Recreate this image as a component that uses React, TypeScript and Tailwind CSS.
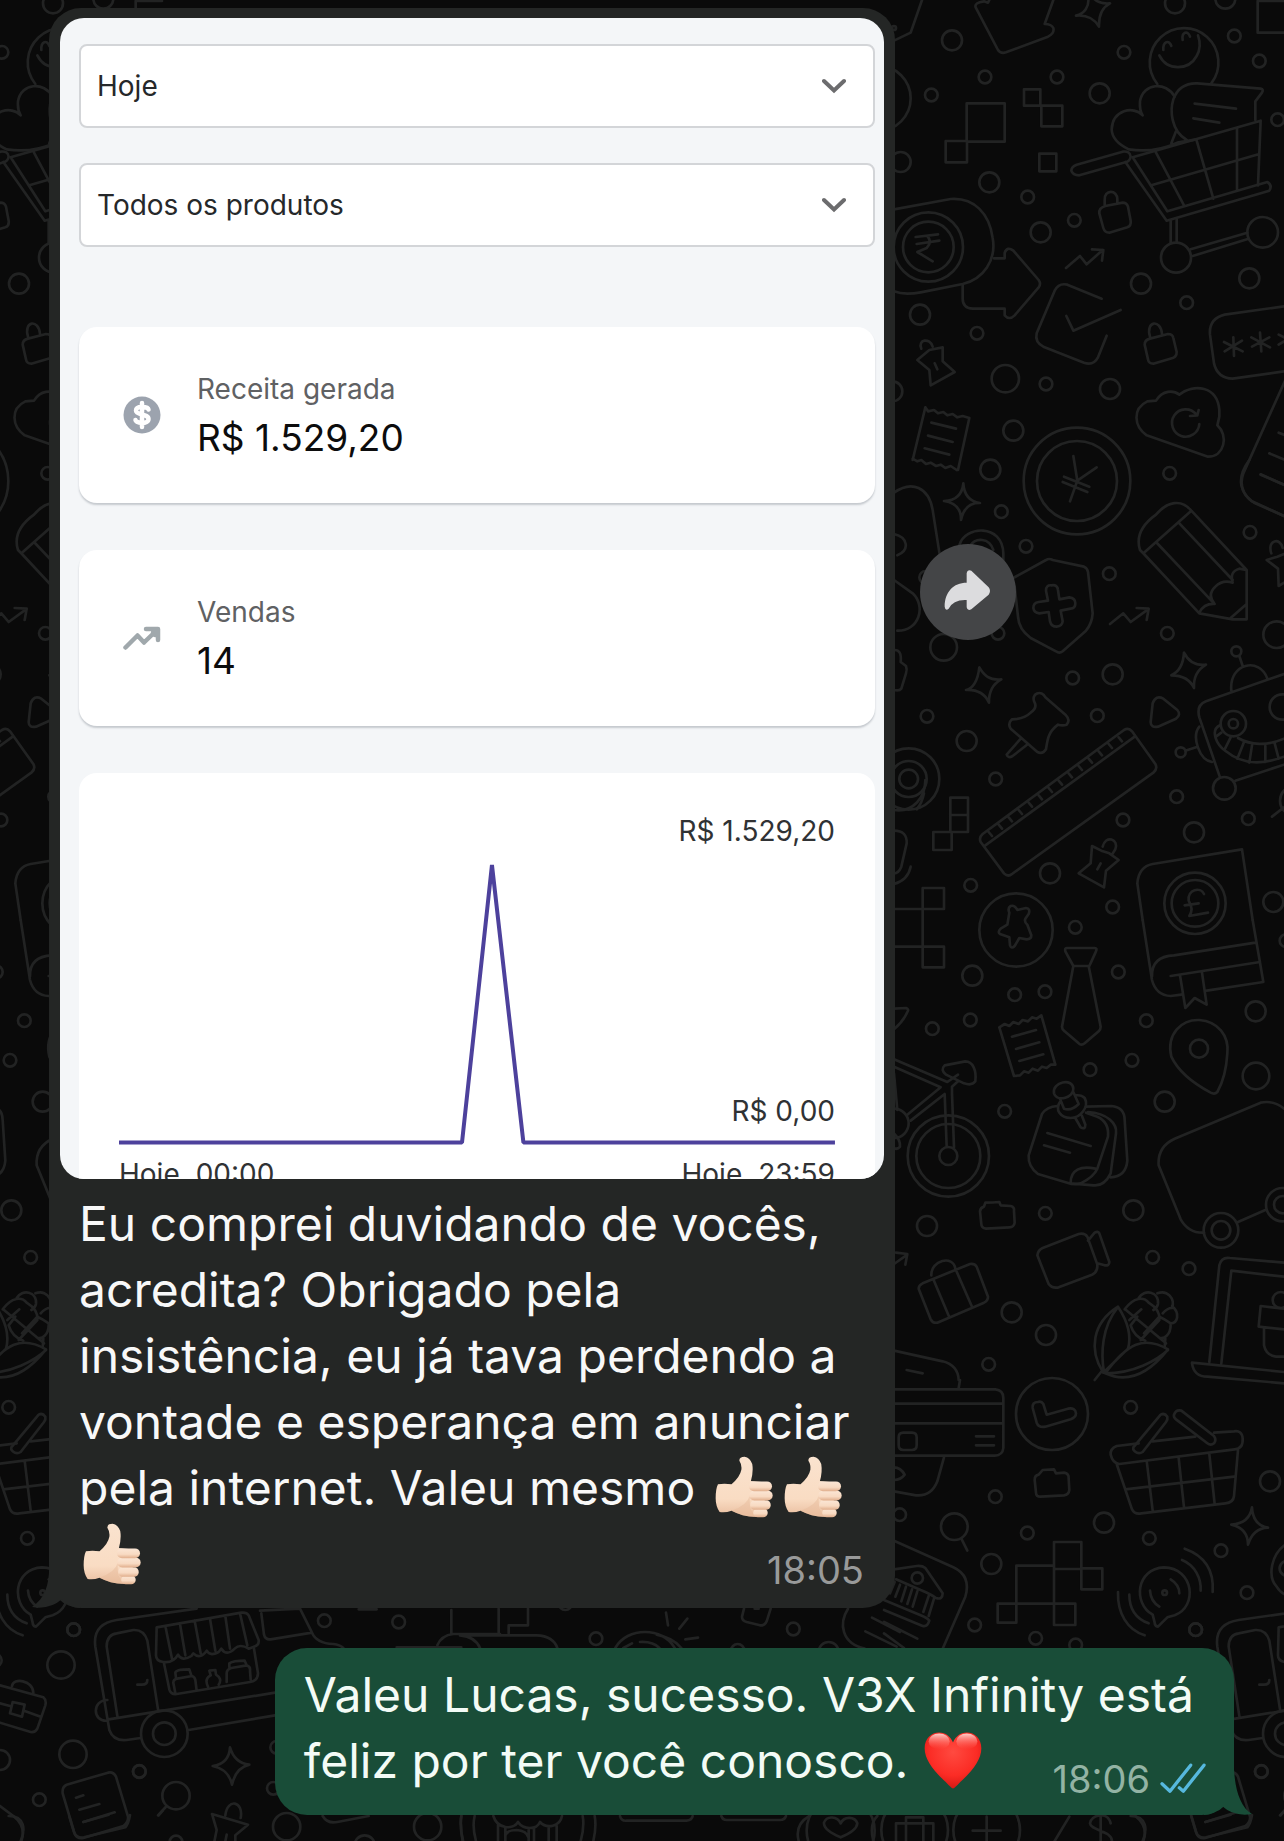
import React, { useState } from 'react';

type Dot = [number, number, number];

interface Patch {
  x: number;
  y: number;
  dots: Dot[];
  paths: string[];
}

// Doodles are drawn at three times their size, one patch after another
const patches: Patch[] = [
  {
    x: 884,
    y: 0,
    dots: [
      [204, 121, 30], [303, 231, 19], [519, 231, 19], [142, 285, 19], [647, 280, 30], [720, 157, 19],
      [873, 10, 30], [1024, -4, 30], [1051, 108, 19], [1126, 183, 19], [1181, 359, 19], [50, 486, 30],
      [316, 547, 30], [431, 591, 19], [571, 661, 19], [470, 697, 30], [771, 851, 30], [1096, 835, 30],
      [908, 908, 19], [108, 944, 30], [279, 1000, 19], [364, 1136, 41], [486, 1152, 19], [678, 1167, 30],
      [25, 1174, 30], [388, 1292, 30], [133, 741, 76], [133, 741, 104], [-18, 295, 98], [30, 84, 6],
      [876, 773, 45], [1136, 697, 46], [579, 1443, 120], [579, 1443, 160],
    ],
    paths: [
      'M114 0L80 98L30 122',
      'M316 0l-4 8l-12-4Q270 8 275 22L342 150Q350 162 366 157L492 110Q512 100 508 84Q502 72 482 72L508 0',
      'M612-10C618 20 600 42 576 47C610 44 632 58 645 80C644 46 654 22 678 10C656 12 640 8 628-6',
      'M1121 3H1200M1121 3V98H1200',
      'M820 252A103 103 0 1 1 982 250',
      'M826 166C850 214 914 212 938 168Q954 140 942 106M838 150C836 124 856 118 862 138M896 120C892 96 912 90 918 110',
      'M862 430L876 394M872 290C846 244 778 248 768 304Q766 330 776 346C748 316 686 330 683 388Q684 424 734 448Q810 460 880 428L938 418',
      'M908 420C860 392 858 330 868 298Q886 248 940 250L1130 266Q1140 268 1134 278L1114 304V360M932 311L1056 326M928 355L1006 368',
      'M746 472L1130 362L1122 556M746 472L850 634L1150 546Q1166 556 1156 572L848 662L724 486M816 458L900 616M938 422L988 596M1059 384V572M802 556L1126 462',
      'M578 494L716 455Q738 452 740 470Q738 484 724 487L586 526Q566 526 562 512Q562 500 578 494Z',
      'M860 662V728M878 656V728M920 748L1090 698M926 768L1094 716',
      'M248 310H362V425H248ZM185 423H249V487H185ZM420 268H469V317H420ZM472 317H535V379H472ZM466 461H517V514H466Z',
      'M30 628L200 597C270 592 316 640 326 714C338 780 298 838 236 852L110 877Q60 886 30 874',
      'M95 711L162 703M98 732L166 722M130 708Q146 726 128 744L100 756L146 784',
      'M330 775H362V758Q370 738 388 752L464 840Q472 852 464 862L392 946Q376 962 362 946V926H266Q236 924 236 896V854',
      'M662 614V600C660 568 700 568 700 598V610M664 618L716 608Q728 608 732 620L740 662Q742 678 730 682L676 698Q662 698 658 684L646 640Q644 624 664 618Z',
      'M546 804L588 768L608 793L656 750M624 748L658 750L654 782',
      'M653 896L550 854Q524 848 512 872L458 1000Q452 1026 478 1040L600 1088Q628 1098 642 1072L668 1007M547 948L568 992L710 930',
      'M798 1010C784 962 830 956 834 1002M798 1016L852 1002Q866 1002 868 1014L878 1056Q878 1070 866 1074L808 1091Q794 1091 792 1078L782 1034Q782 1020 798 1016Z',
      'M1200 919L1022 944Q974 956 978 1004L990 1090Q1000 1134 1046 1136L1200 1114',
      'M1048 1012L1050 1068M1020 1026L1076 1054M1022 1054L1074 1022M1128 998L1132 1054M1102 1012L1158 1042M1104 1040L1156 1012M1184 1004L1200 1012M1184 1034L1200 1024',
      'M112 1046C100 1018 138 1012 146 1040M136 1050L176 1042V1084L212 1116L140 1156L136 1110L100 1080ZM152 1090L160 1108',
      'M124 1222L132 1234L150 1230L162 1240L178 1236L190 1246L206 1242L220 1252L236 1248L256 1254L222 1410M124 1222L86 1380M142 1268L216 1286M132 1307L206 1326M122 1345L196 1364M86 1376L100 1384L112 1380L126 1392L140 1388L156 1398L170 1394L184 1404L200 1398L218 1410',
      'M816 1202C836 1170 868 1170 886 1184C930 1150 1000 1158 1006 1230V1250L1000 1276C1034 1306 1022 1370 972 1370L788 1306C750 1280 744 1226 790 1204ZM946 1272A41 41 0 1 1 936 1242M918 1248L940 1246L944 1230',
      'M1204 1140L1078 1420Q1060 1470 1104 1504L1200 1548M1184 1298L1204 1306M1156 1360L1204 1380M1130 1424L1204 1456',
      'M568 1368L580 1442L638 1402M580 1442L558 1504M540 1430L616 1460M536 1446L610 1476',
    ],
  },
  {
    x: 884,
    y: 460,
    dots: [
      [319, 29, 30], [352, 155, 19], [426, 259, 19], [857, 40, 19], [676, 341, 19], [850, 520, 19],
      [1098, 217, 19], [1178, 524, 40], [179, 562, 40], [566, 654, 19], [686, 643, 30], [640, 767, 19],
      [129, 769, 19], [248, 843, 30], [335, 957, 19], [717, 1080, 19], [878, 1010, 19], [1093, 1076, 19],
      [930, 1117, 30], [498, 1240, 30], [260, 1276, 19], [686, 1341, 19], [1168, 1326, 30], [1057, 574, 15],
      [1048, 791, 38], [1048, 791, 14], [1195, 741, 38], [1021, 985, 34], [890, 877, 15], [74, 957, 92],
      [74, 957, 54], [74, 957, 28], [342, 520, 19], [125, 352, 19], [933, 1330, 92], [933, 1330, 70],
      [396, 1410, 110], [1232, 1022, 44],
    ],
    paths: [
      'M30 98C84 60 134 82 146 150L168 290M30 222C72 232 78 270 40 286M30 360L86 400C128 440 104 514 40 512',
      'M30 570Q54 568 50 606L66 618Q70 628 66 640L52 686Q46 694 30 690',
      'M226 256C242 196 356 190 358 280V310M258 258C274 232 316 232 328 270',
      'M238 70C234 110 210 122 180 123C214 128 232 146 231 180C238 146 258 128 288 129C256 124 240 106 238 70Z',
      'M384 356L486 300Q496 294 506 300L600 320Q610 324 612 336L626 460Q624 490 606 512L536 574Q526 582 516 574L440 534Q404 508 402 470L392 380',
      'M486 392Q486 374 502 376Q520 372 522 390L526 418L556 412Q574 414 574 430Q574 446 560 446L530 452L536 484Q534 498 518 500Q502 500 498 484L494 456L466 460Q450 458 448 444Q448 428 464 426L492 422Z',
      'M678 492L718 460L740 486L792 448M758 444L794 446L788 480',
      'M768 270C754 226 780 190 816 164C850 124 892 116 922 152L1088 330V478L1046 478L946 460L780 282ZM780 278L922 152M816 246L990 430M884 188L1046 360M946 458Q960 430 992 432Q968 404 994 380Q1016 358 1046 368Q1036 334 1066 326L1086 330M1040 474L1088 432',
      'M1096 0Q1066 40 1072 76Q1080 112 1110 128L1200 168M1130 43L1200 74',
      'M1162 280C1148 238 1190 232 1196 264M1200 282L1180 290L1148 300L1182 326L1184 378L1204 366',
      'M286 622C282 656 270 684 246 690C286 688 304 704 315 728C314 692 326 672 352 658C316 662 300 646 286 622Z',
      'M900 578C898 612 888 634 862 646C898 646 918 658 930 684C928 648 942 628 966 614C932 618 912 602 900 578Z',
      'M452 728C438 700 474 688 484 712L546 766Q560 780 548 794Q536 798 522 794C492 816 490 840 486 868Q476 884 460 876L380 806Q370 790 384 778Q420 778 440 758Q460 744 452 728ZM410 836L368 884Q372 896 386 888L432 852',
      'M806 730Q816 704 838 716L880 750Q892 764 876 776L822 800Q800 804 800 786Z',
      'M720 810Q734 802 744 814L814 912Q822 926 808 938L384 1242Q372 1252 360 1240L290 1146Q284 1132 296 1122ZM304 1156L752 830M314 1116L324 1128M344 1094L354 1106M374 1072L384 1084M404 1050L414 1062M434 1028L444 1040M464 1006L474 1018M494 984L504 996M524 962L534 974M554 940L564 952M584 918L594 930M614 896L624 908M644 874L654 886M674 852L684 864M704 832L714 844',
      'M1066 588L1076 618M1042 692C1034 608 1128 590 1150 656M1200 642L966 724Q936 736 946 772L1008 952M1054 962L1200 914M946 800C922 830 946 900 984 906M904 872L936 862',
      'M1008 796C978 810 996 854 1026 874C1080 918 1140 912 1200 890M1062 834C1100 856 1150 858 1200 836M996 830L1012 818M1022 868L1040 832M1060 896L1080 846M1096 908L1104 856M1144 906L1144 858M1184 896L1172 850',
      'M30 1050C90 1058 124 1010 124 960M120 1000Q114 1030 98 1048M30 1112Q70 1112 68 1150L52 1220Q44 1240 30 1240M80 1220Q72 1260 30 1272',
      'M199 1013H252V1116H199ZM199 1065H252M148 1116H203V1170H148ZM30 1347H116M116 1284H180V1347H116ZM116 1347V1460M30 1460H180M116 1460H180V1522H116Z',
      'M656 1160C664 1124 706 1136 694 1168L684 1184M624 1158L652 1172L676 1180L704 1200L666 1232L660 1282L584 1240L620 1210ZM650 1210L640 1228',
      'M1164 1070L1200 1042',
      'M776 1380L760 1270Q764 1220 806 1212L1074 1168L1106 1380',
      'M960 1302C950 1280 910 1288 914 1322Q930 1346 916 1368L972 1358M902 1336L944 1330',
    ],
  },
  {
    x: 884,
    y: 920,
    dots: [
      [574, 22, 19], [265, 167, 30], [392, 224, 19], [483, 215, 19], [259, 300, 19], [145, 326, 19],
      [703, 156, 19], [787, 302, 19], [744, 421, 19], [618, 449, 19], [842, 545, 30], [1115, 274, 30],
      [1116, 468, 40], [945, 386, 27], [362, 574, 19], [748, 871, 30], [129, 918, 30], [484, 880, 19],
      [383, 1177, 30], [486, 1245, 30], [314, 1333, 19], [806, 1012, 19], [915, 1046, 19], [193, 708, 122],
      [193, 708, 96], [193, 708, 27], [1011, 931, 52], [1011, 931, 28], [1196, 854, 50], [1196, 854, 26],
      [1206, 62, 19], [30, 610, 44], [1190, 1140, 24],
    ],
    paths: [
      'M376-22Q370-36 380-42Q392-46 400-30L426-36Q440-34 434-18L424-4Q420 6 430 14L442 46Q442 58 428 58L406 54L392 78Q382 88 378 76L376 52L348 42Q340 36 350 26L370 14Z',
      'M548 84H632Q640 84 636 94L616 138H568L544 94Q542 84 548 84ZM568 138L534 320Q534 328 542 334L584 370Q592 378 602 370L644 334Q650 328 650 320L614 138',
      'M776 0L804 180Q816 226 860 228L892 224M804 170C802 126 830 108 870 106L1114 68M1106 0L1138 186L968 212M860 168L1128 126M888 166L904 264L932 234L968 254L954 158',
      'M30 266L66 264Q76 268 70 276Q58 304 30 328',
      'M346 322L362 312L376 318L388 306L404 312L416 300L432 304L444 292L458 296L472 286L514 434L500 434L488 444L474 440L462 452L446 446L434 458L420 454L408 466L390 468ZM384 350L456 330M396 387L466 367M406 423L478 403',
      'M862 410C846 340 894 298 946 300C1002 304 1036 348 1030 400Q1026 470 1000 516Q992 524 980 518Q890 470 862 410Z',
      'M30 418L190 486L222 464M30 440L170 502L70 584M80 602L182 522L188 680M222 484L204 500V520L210 682M182 436L244 424C266 424 278 450 274 484Q264 498 240 490L186 464Q168 450 182 436ZM30 460L40 570M30 640Q50 660 48 680Q40 690 30 684',
      'M510 520C504 486 566 472 568 506C570 532 520 548 510 520ZM528 536L540 566Q562 574 584 552L568 516M530 542C510 570 530 594 560 594C590 594 616 560 602 534Q592 524 576 526M574 594L590 622Q604 630 604 614L594 588',
      'M520 558Q488 560 474 582L434 706Q432 740 462 762L550 788Q570 796 590 790Q630 770 640 746L672 650Q676 606 640 590L606 578M606 560L682 558Q722 562 722 600L730 722Q726 770 680 772M612 576C670 580 700 610 696 640L680 760Q660 800 628 796L560 790M560 788C560 750 590 736 634 746M490 639L620 678M480 676L558 698',
      'M1200 566Q1170 540 1130 548L872 656Q820 680 824 736L890 898Q914 940 960 938M1062 906L1144 870',
      'M300 860L304 848Q326 848 346 846L350 856L380 858Q392 860 390 874L392 908Q390 922 376 922L306 926Q292 924 292 912L288 874Q290 862 300 860Z',
      'M476 984L584 942Q602 938 610 950L640 1034Q642 1056 624 1064L524 1102Q504 1106 494 1092L460 1006Q462 990 476 984ZM612 962L632 938Q642 932 646 940L676 1026Q676 1038 662 1036L640 1030',
      'M30 1032L70 1004M36 998L70 1002L64 1034',
      'M116 1090L258 1032Q272 1030 278 1040L312 1130Q312 1142 300 1148L160 1208Q146 1210 140 1198L104 1106Q104 1096 116 1090ZM142 1066C140 1020 208 1004 214 1046M148 1078L196 1192M214 1046L264 1160',
      'M658 1358C614 1290 624 1210 702 1160Q748 1230 732 1286L660 1356C650 1300 654 1220 700 1164M664 1360C730 1270 780 1246 852 1288Q760 1404 664 1360C750 1360 820 1320 852 1290M632 1380L656 1350',
      'M722 1168C750 1130 780 1130 794 1148Q830 1170 826 1200L770 1260M740 1216L760 1190M740 1216Q750 1250 784 1262M726 1170L846 1270M764 1134C780 1106 826 1114 822 1152Q820 1164 808 1170M820 1120C850 1108 874 1136 864 1164Q850 1164 836 1180M864 1158C890 1180 880 1210 860 1210Q840 1196 826 1190M772 1168L736 1200M826 1190L780 1240M860 1214C860 1244 840 1260 824 1252M844 1256L842 1282',
      'M976 1326L1006 1036Q1012 1010 1038 1014L1200 1028M1012 1330L1042 1052L1200 1070M924 1328L1200 1356M924 1330Q930 1370 970 1370L1200 1390M1130 1158L1200 1166M1130 1158L1124 1220L1200 1228M1140 1224V1276Q1146 1306 1176 1310H1200',
      'M30 1292L176 1324Q222 1336 224 1380M68 1350L116 1360',
    ],
  },
  {
    x: 884,
    y: 1380,
    dots: [
      [504, 102, 108], [740, 82, 19], [334, 350, 19], [430, 459, 19], [660, 428, 30], [796, 475, 19],
      [1158, 304, 30], [1011, 512, 19], [1089, 638, 19], [935, 749, 19], [211, 440, 40], [322, 552, 30],
      [272, 735, 19], [455, 775, 19], [575, 795, 19], [842, 638, 7], [100, 594, 17], [47, 404, 19],
      [1132, 1175, 19], [308, 1350, 100], [92, 1350, 100],
    ],
    paths: [
      'M30 28H334Q358 30 358 54V204Q356 226 332 227H30M30 71H356M30 130H356M58 158H84Q98 158 98 172V196Q98 210 84 210H58Q44 210 44 196V172Q44 158 58 158ZM276 169H330M276 196H330M224 24L228 0M180 232L160 304Q142 350 96 346L30 334M30 262Q50 262 62 284Q50 300 30 300',
      'M446 84Q444 66 462 66Q472 62 478 72L488 104L552 86Q574 82 576 100Q576 112 560 118L484 140Q464 144 458 128Z',
      'M464 284L476 270L510 268L516 280L540 278Q556 280 554 296L556 330Q554 344 540 346L470 350Q456 350 456 338L452 300Q452 286 464 284Z',
      'M764 190L698 198Q678 206 680 224Q686 250 706 252L1052 208Q1078 206 1076 176Q1074 150 1050 154L990 158M806 184L934 170M698 252L744 388Q752 404 772 400L1024 370Q1048 368 1050 348L1062 210M724 328L1050 290M788 242L806 392M884 234L900 382M976 222L992 372',
      'M748 202L830 104Q842 98 850 110Q852 118 846 126L776 216Q764 224 752 214Q746 208 748 202ZM870 104Q876 88 892 92L990 168Q998 180 990 190Q980 198 970 190L876 118Q868 112 870 104Z',
      'M1104 382C1098 420 1074 432 1042 434C1078 442 1092 462 1092 494C1102 462 1124 444 1152 443C1122 438 1106 420 1104 382Z',
      'M232 476L250 512M30 482L208 562C246 580 256 610 244 650L176 806M0 760L60 804M0 660L110 706Q130 714 136 722Q130 742 116 738L0 690M36 598L110 630Q140 642 156 654Q176 660 176 640L124 564Q114 556 98 558L30 568M32 606L18 640M66 620L52 664M100 634L86 680M134 648L118 696M48 614L34 650M84 628L70 672M150 656L134 708M0 726L100 776',
      'M510 486H592V567H510ZM592 565H655V628H592ZM397 557H510V671H397ZM510 567V671M341 671H397V728H341ZM510 671H574V735H510Z',
      'M806 704C746 670 756 566 840 562C930 564 942 680 872 706L850 712L822 740Q812 738 812 728ZM860 598Q886 614 886 640M798 632Q800 664 826 680M902 506C970 530 990 580 986 636M894 540C934 556 952 596 950 632M702 636C700 700 730 750 782 766M736 644C736 690 756 716 794 730',
      'M1210 490C1160 520 1150 590 1178 620Q1190 640 1210 646M1210 540C1180 550 1178 580 1210 590',
      'M1104 1305Q1100 1330 1090 1342L966 1372Q944 1376 936 1356L922 1310M964 1326L1040 1304M1190 1306L1202 1292M36 1383V1330H148V1383M66 1383V1312H118V1383M266 1352H350M308 1310V1383M512 1383L556 1310M680 1330C670 1290 620 1306 618 1330C620 1352 684 1352 684 1383M650 1300V1383M740 1308C790 1308 790 1350 776 1383',
    ],
  },
  {
    x: 0,
    y: 1380,
    dots: [
      [973, 722, 19], [1196, 726, 19], [221, 749, 19], [183, 855, 41], [0, 1140, 30], [219, 1123, 41],
      [418, 1174, 19], [528, 1247, 41], [118, 1259, 19], [860, 1340, 41], [1283, 1340, 41], [820, 1225, 19],
      [528, 1386, 19], [1094, 1396, 30], [493, 1061, 70], [493, 1061, 34], [830, 1102, 19], [-14, 841, 19],
    ],
    paths: [
      'M590 686L350 720C300 728 280 756 286 800L328 1050Q340 1084 380 1080L422 1074M566 1050L825 1006M326 1018L825 938M322 960C276 960 276 1026 322 1022M352 1008L320 800Q320 764 350 760L400 750Q432 748 442 782L474 988M412 914H426Q442 914 442 900',
      'M470 742L724 698Q740 696 746 706L776 780Q778 796 762 800L746 806Q720 790 704 806Q680 830 664 806L656 816Q630 830 620 812Q600 840 580 820L574 828Q546 846 534 824Q520 850 490 846Q468 844 468 826ZM496 738L516 836M540 732L556 826M584 722L602 820M630 716L646 812M676 708L690 806M720 700L742 796',
      'M492 850L508 928Q512 944 530 942L750 906Q774 902 774 880L762 806M526 940L520 908Q520 898 532 896L576 888Q584 890 586 900L590 932M528 894L526 878Q528 868 568 868L574 886M624 920Q612 896 632 886L628 872L646 870L648 884Q668 896 656 914M680 906V880Q680 868 694 864L740 856Q752 860 750 872L752 898M688 862V850Q700 842 734 842L740 856',
      'M784 700L792 764Q796 780 812 778L936 758M780 692L900 686L936 758Q950 790 1000 792Q1020 794 1030 804M1076 688H1130M1190 802H1384M1312 796Q1324 766 1360 762H1500M1354 690V762',
      'M0 916L130 952Q140 960 136 976L112 1046Q106 1058 92 1056L0 1028M0 970L30 978M72 992L122 1010M38 966L74 974L66 1010L30 1000ZM36 918C40 892 98 900 100 938',
      'M200 1214L324 1178Q340 1174 348 1190L384 1310Q386 1326 370 1338L250 1374Q232 1378 224 1362L188 1240Q186 1220 200 1214ZM228 1253L250 1246M238 1289L298 1272M250 1326L344 1297',
      'M690 1102C688 1138 666 1154 638 1158C668 1164 690 1184 696 1214C704 1180 720 1160 748 1154C714 1150 698 1130 690 1102Z',
      'M500 1278L474 1306M676 1306C682 1252 732 1264 722 1314M636 1302L744 1334L706 1366V1400M636 1302L650 1350L640 1400M680 1364L676 1384M0 1278L40 1308Q80 1340 64 1383',
      'M968 1308Q982 1332 1012 1326L1106 1308M1384 1307C1378 1340 1386 1370 1390 1386',
    ],
  },
  {
    x: 460,
    y: 1380,
    dots: [[408, 776, 19], [1000, 747, 19], [833, 812, 20], [1106, 816, 30], [316, 670, 20], [1142, 1352, 102]],
    paths: [
      'M116 686V760M204 686V736H146V760M0 766H230Q280 768 292 804M0 766Q46 770 60 804M466 804C500 740 610 740 644 804M490 804L516 790M540 786Q580 784 598 804M590 764Q640 774 664 804M618 698L624 736M682 716L658 746M676 778L714 773',
      'M852 686L846 710Q846 722 860 726L900 736Q914 738 920 724L932 686M884 686H896',
      'M1164 686C1136 730 1144 790 1214 806M1236 713L1320 756M1216 754L1310 800',
      'M4 1308Q0 1340 8 1383M44 1308Q36 1340 48 1383M404 1308Q410 1340 400 1383M368 1308Q374 1340 362 1383M100 1308C112 1348 160 1350 174 1326C190 1350 230 1350 240 1326C260 1348 300 1340 306 1308M114 1336V1383M136 1344V1383M206 1350V1383M222 1346V1383M266 1344V1383M290 1338V1383M136 1366Q142 1350 170 1350Q200 1352 206 1374',
      'M480 1308Q484 1324 500 1322H680Q696 1320 698 1308M784 1308Q788 1320 800 1320H960Q974 1320 978 1308M1048 1308C1010 1330 1010 1360 1016 1383M1142 1372Q1090 1350 1092 1328C1100 1306 1132 1308 1142 1330C1152 1308 1184 1308 1192 1330Q1190 1352 1142 1372M1252 1308C1230 1330 1234 1360 1240 1383',
    ],
  },
];

function Doodles({ shift }: { shift: number }) {
  return (
    <g transform={`translate(${shift} 0)`}>
      {patches.map((patch) => (
        <g key={`${patch.x}-${patch.y}`} transform={`translate(${patch.x} ${patch.y}) scale(0.33333)`}>
          {patch.dots.map(([cx, cy, r], i) => (
            <circle key={i} cx={cx} cy={cy} r={r} />
          ))}
          {patch.paths.map((d, i) => (
            <path key={i} d={d} />
          ))}
        </g>
      ))}
    </g>
  );
}

function Wallpaper() {
  return (
    <svg
      className="absolute inset-x-0 top-0 w-full h-auto"
      viewBox="0 0 1284 1841"
      fill="none"
      stroke="#222323"
      strokeWidth={8}
      strokeLinecap="round"
      strokeLinejoin="round"
      aria-hidden="true"
    >
      <Doodles shift={-1122} />
      <Doodles shift={0} />
      <Doodles shift={1122} />
    </svg>
  );
}

function ThumbsUp({ className = '' }: { className?: string }) {
  return (
    <svg viewBox="0 0 176 188" className={`inline-block w-[58px] h-[62px] ${className}`} role="img" aria-label="👍🏻">
      <defs>
        <linearGradient id="skin" x1="0" y1="0" x2="0" y2="1">
          <stop offset="0" stopColor="#fae3cf" />
          <stop offset="0.7" stopColor="#f9dcc3" />
          <stop offset="1" stopColor="#e9bd9e" />
        </linearGradient>
        <linearGradient id="finger" x1="0" y1="0" x2="0" y2="1">
          <stop offset="0" stopColor="#fbe6d5" />
          <stop offset="0.6" stopColor="#f8dac2" />
          <stop offset="1" stopColor="#e0ad8b" />
        </linearGradient>
      </defs>
      <path
        fill="url(#skin)"
        d="M9 86Q28 83 50 86Q76 64 80 42Q82 26 74 14Q73 2 90 2Q106 5 113 24Q117 48 109 76L152 80L150 184Q112 188 84 180Q62 172 50 166Q32 173 14 170Q2 152 2 128Q2 100 9 86Z"
      />
      <path d="M50 166Q84 184 120 184L108 160Q104 146 106 120Q98 150 50 166Z" fill="#e8bb9b" opacity="0.5" />
      <rect x="116" y="158" width="44" height="28" rx="14" fill="url(#finger)" />
      <rect x="107" y="134" width="62" height="29" rx="14" fill="url(#finger)" />
      <rect x="104" y="105" width="71" height="30" rx="15" fill="url(#finger)" />
      <rect x="103" y="77" width="70" height="30" rx="15" fill="url(#finger)" />
    </svg>
  );
}

function Heart() {
  return (
    <svg
      viewBox="0 0 176 178"
      className="inline-block w-[58px] h-[59px] ml-4 -mt-2 align-middle"
      role="img"
      aria-label="❤️"
    >
      <defs>
        <radialGradient id="heart" cx="0.5" cy="0.35" r="0.7">
          <stop offset="0" stopColor="#ff4a40" />
          <stop offset="0.6" stopColor="#fb2c25" />
          <stop offset="1" stopColor="#cf1410" />
        </radialGradient>
        <linearGradient id="shine" x1="0" y1="0" x2="0" y2="1">
          <stop offset="0" stopColor="#ffe1dd" stopOpacity="0.9" />
          <stop offset="1" stopColor="#ff6a60" stopOpacity="0" />
        </linearGradient>
      </defs>
      <path
        fill="url(#heart)"
        d="M88 174Q82 172 66 154Q2 98 2 52C2 22 22 4 46 4C66 4 80 16 88 34C96 16 110 4 130 4C154 4 174 22 174 52Q174 98 110 154Q94 172 88 174Z"
      />
      <ellipse cx="46" cy="31" rx="32" ry="24" fill="url(#shine)" />
      <ellipse cx="130" cy="31" rx="32" ry="24" fill="url(#shine)" />
    </svg>
  );
}

function Filter({ label, options }: { label: string; options: string[] }) {
  const [value, setValue] = useState(options[0]);

  return (
    <div className="relative">
      <select
        aria-label={label}
        value={value}
        onChange={(e) => setValue(e.target.value)}
        className="block w-full h-[84px] pl-4 pr-16 appearance-none bg-white border-2 border-[#d3d5d8] rounded-lg text-[28px] text-[#26282a]"
      >
        {options.map((option) => (
          <option key={option}>{option}</option>
        ))}
      </select>
      <svg
        viewBox="0 0 24 16"
        className="absolute right-[29px] top-[34px] w-6 h-4 pointer-events-none"
        fill="none"
        stroke="#6c6c6e"
        strokeWidth={4}
        strokeLinecap="round"
      >
        <path d="M2 3L12 12.500L22 3" />
      </svg>
    </div>
  );
}

function Metric({ icon, label, value }: { icon: React.ReactNode; label: string; value: string }) {
  return (
    <div className="flex items-center gap-9 h-44 pl-11 bg-white rounded-[18px] shadow-[0_2px_2px_#c5c9ce]">
      {icon}
      <div>
        <p className="text-[28px] leading-[44px] text-[#5f6163]">{label}</p>
        <p className="text-[37px] leading-[53px] text-[#0c0c0d]">{value}</p>
      </div>
    </div>
  );
}

function SalesPanel() {
  return (
    <div className="pt-[26px] pl-[19px] pr-[9px] rounded-3xl overflow-hidden bg-[#f4f6f8]">
      <div className="flex flex-col gap-[35px]">
        <Filter label="Período" options={['Hoje']} />
        <Filter label="Produto" options={['Todos os produtos']} />
      </div>

      <div className="mt-20 flex flex-col gap-[47px]">
        <Metric
          label="Receita gerada"
          value="R$ 1.529,20"
          icon={
            <svg viewBox="0 0 38 38" className="w-[38px] h-[38px]">
              <circle cx="19" cy="19" r="18.500" fill="#9ca3ae" />
              <path
                d="M25.500 13.500C25 10.500 13 9.500 13 14.500C13 19.500 25.500 17.500 25.500 23C25.500 28.500 13 27.500 12.500 24M19 7V31"
                fill="none"
                stroke="#fff"
                strokeWidth={4.5}
                strokeLinecap="round"
              />
            </svg>
          }
        />
        <Metric
          label="Vendas"
          value="14"
          icon={
            <svg
              viewBox="0 0 38 26"
              className="w-[38px] h-[26px]"
              fill="none"
              stroke="#a0a8ac"
              strokeWidth={4.5}
              strokeLinecap="round"
              strokeLinejoin="round"
            >
              <path d="M2.500 22.500L14.500 10.500L21 17.500L34 5M23 4H35V15M30 7.500H32V10" />
            </svg>
          }
        />

        <div className="px-10 pt-10 bg-white rounded-t-[18px] text-[28px] leading-9 text-[#303234]">
          <p className="text-right">R$ 1.529,20</p>
          <div className="relative mt-[14px]">
            <svg viewBox="0 0 717 283" className="block w-full h-auto" fill="none" stroke="#4d419c" strokeWidth={4}>
              <path d="M0 280H343.500L373.500 2L405 280H717" strokeLinejoin="bevel" />
            </svg>
            <p className="absolute right-0 bottom-[17px]">R$ 0,00</p>
          </div>
          <div className="flex justify-between mt-[10px] h-[23px] overflow-hidden">
            <span>Hoje, 00:00</span>
            <span>Hoje, 23:59</span>
          </div>
        </div>
      </div>
    </div>
  );
}

export default function App() {
  return (
    <main className="relative min-h-screen overflow-hidden bg-[#0a0a0a] pt-2 pb-[25px] font-['Inter',sans-serif]">
      <Wallpaper />

      <div className="relative flex items-start gap-[25px] pl-[49px]">
        <article className="relative w-[68.5%] px-[11px] pt-[10px] pb-[21px] rounded-[32px] bg-[#242625] text-[#f8f8f8]">
          <svg viewBox="0 0 48 46" className="absolute -left-[17px] bottom-0 w-12 h-[46px]" fill="#242625">
            <path d="M17 0C18 20 14 36 0 45Q18 48 30 37Q38 46 48 46V0Z" />
          </svg>
          <div className="relative">
            <SalesPanel />
            <p className="mt-3 pl-[19px] text-[48px] leading-[66px] whitespace-nowrap">
              Eu comprei duvidando de vocês,
              <br />
              acredita? Obrigado pela
              <br />
              insistência, eu já tava perdendo a
              <br />
              vontade e esperança em anunciar
              <br />
              pela internet. Valeu mesmo
              <ThumbsUp className="ml-5 -mt-2 align-middle" />
              <ThumbsUp className="ml-[11px] -mt-2 align-middle" />
            </p>
            <div className="flex items-center justify-between h-[66px] pl-[23px] pr-5">
              <ThumbsUp />
              <time className="mt-8 text-[38px] leading-[40px] text-[#999a9a]">18:05</time>
            </div>
          </div>
        </article>

        <button aria-label="Encaminhar" className="mt-[536px] w-24 h-24 shrink-0 rounded-full bg-[#444547]">
          <svg viewBox="0 0 288 288" className="w-24 h-24" fill="#dcdcde">
            <path d="M140 116V88Q142 76 154 80L206 130Q214 141 206 152L154 196Q142 202 140 190V168Q100 166 86 194Q76 202 74 188C74 144 100 116 140 116Z" />
          </svg>
        </button>
      </div>

      <article className="relative w-[74.7%] mt-10 ml-auto mr-[50px] pt-[14px] pb-[21px] pl-[29px] pr-7 rounded-[32px] bg-[#194d38] text-[#f3fbf6]">
        <svg viewBox="0 0 48 46" className="absolute -right-[18px] bottom-0 w-12 h-[46px]" fill="#194d38">
          <path d="M30 0C31 20 36 38 48 45Q30 48 18 37Q10 46 0 46V0Z" />
        </svg>
        <div className="relative text-[48px] leading-[66px] whitespace-nowrap">
          <p>Valeu Lucas, sucesso. V3X Infinity está</p>
          <div className="flex justify-between">
            <p>
              feliz por ter você conosco.
              <Heart />
            </p>
            <div className="flex items-center gap-[10px] h-[66px] pt-9 text-[38px] leading-[40px] text-[#93b3a4]">
              <time>18:06</time>
              <svg
                viewBox="0 0 138 92"
                className="w-[46px] h-[31px]"
                fill="none"
                stroke="#56b8de"
                strokeWidth={10}
                strokeLinecap="round"
                strokeLinejoin="round"
                aria-label="Lida"
              >
                <path d="M6 62L30 84L92 6M58 74L70 84L132 6" />
              </svg>
            </div>
          </div>
        </div>
      </article>
    </main>
  );
}
